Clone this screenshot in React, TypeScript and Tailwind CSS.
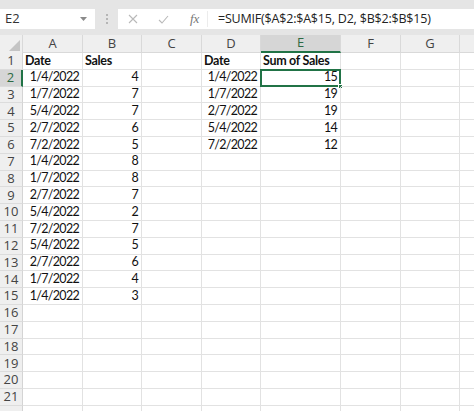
import React from 'react';

const columns = [
  { key: 'A', width: 'w-[60px]' },
  { key: 'B', width: 'w-[59px]' },
  { key: 'C', width: 'w-[60px]' },
  { key: 'D', width: 'w-[59px]' },
  { key: 'E', width: 'w-[80px]' },
  { key: 'F', width: 'w-[60px]' },
  { key: 'G', width: 'w-[59px]' },
  { key: 'H', width: 'w-[60px]' },
];

type Cell = { text: string; bold?: boolean; align?: 'left' | 'right' };
type RowData = Record<string, Cell>;

const sales: [string, number][] = [
  ['1/4/2022', 4],
  ['1/7/2022', 7],
  ['5/4/2022', 7],
  ['2/7/2022', 6],
  ['7/2/2022', 5],
  ['1/4/2022', 8],
  ['1/7/2022', 8],
  ['2/7/2022', 7],
  ['5/4/2022', 2],
  ['7/2/2022', 7],
  ['5/4/2022', 5],
  ['2/7/2022', 6],
  ['1/7/2022', 4],
  ['1/4/2022', 3],
];

const sums: [string, number][] = [
  ['1/4/2022', 15],
  ['1/7/2022', 19],
  ['2/7/2022', 19],
  ['5/4/2022', 14],
  ['7/2/2022', 12],
];

const buildRows = (): RowData[] => {
  const rows: RowData[] = [];
  rows.push({
    A: { text: 'Date', bold: true },
    B: { text: 'Sales', bold: true },
    D: { text: 'Date', bold: true },
    E: { text: 'Sum of Sales', bold: true },
  });
  for (let i = 0; i < 21; i++) {
    const row: RowData = {};
    if (sales[i]) {
      row.A = { text: sales[i][0], align: 'right' };
      row.B = { text: String(sales[i][1]), align: 'right' };
    }
    if (sums[i]) {
      row.D = { text: sums[i][0], align: 'right' };
      row.E = { text: String(sums[i][1]), align: 'right' };
    }
    rows.push(row);
  }
  return rows;
};

const rows = buildRows();

const uiFont = { fontFamily: '"Open Sans", "Noto Sans", sans-serif' };
const cellFont = { fontFamily: 'Lato, "Open Sans", sans-serif' };

export default function App() {
  return (
    <div className="h-[411px] w-[474px] overflow-hidden bg-[#e5e5e5]" style={uiFont}>
      {/* formula bar */}
      <div className="flex h-[35px] items-start pt-[9px]">
        <div className="flex h-[20px] w-[95px] items-center justify-between bg-white pl-[5px] pr-[8px] text-[13px] text-[#333]">
          <span>E2</span>
          <svg width="7" height="4" viewBox="0 0 7 4">
            <path d="M0 0h7L3.5 4z" fill="#8a8a8a" />
          </svg>
        </div>
        <div className="flex h-[20px] w-[23px] flex-col items-center justify-center gap-[2px]">
          <span className="h-[2px] w-[2px] bg-[#b5b5b5]" />
          <span className="h-[2px] w-[2px] bg-[#b5b5b5]" />
          <span className="h-[2px] w-[2px] bg-[#b5b5b5]" />
        </div>
        <div className="flex h-[20px] flex-1 items-center bg-white">
          <div className="flex w-[89px] items-center">
            <svg className="ml-[10px]" width="10" height="10" viewBox="0 0 10 10">
              <path d="M1 1l8 8M9 1l-8 8" stroke="#b9b9b9" strokeWidth="1.1" />
            </svg>
            <svg className="ml-[20px]" width="11" height="9" viewBox="0 0 11 9">
              <path d="M1 5l3 3 6-7" stroke="#b9b9b9" strokeWidth="1.1" fill="none" />
            </svg>
            <span
              className="ml-[21px] text-[13px] italic text-[#777]"
              style={{ fontFamily: '"Liberation Serif", serif' }}
            >
              fx
            </span>
          </div>
          <div className="h-[16px] w-px bg-[#ececec]" />
          <span className="ml-[10px] whitespace-nowrap text-[12.5px] tracking-[-0.2px] text-[#222]">
            =SUMIF($A$2:$A$15, D2, $B$2:$B$15)
          </span>
        </div>
      </div>

      {/* column headers */}
      <div className="flex h-[18px] bg-[#efefef] text-[13px] text-[#444]">
        <div className="relative w-[23px] shrink-0 border-r border-[#d9d9d9]">
          <svg className="absolute bottom-[2px] right-[2px]" width="11" height="11" viewBox="0 0 11 11">
            <path d="M11 0v11H0z" fill="#c4c4c4" />
          </svg>
        </div>
        {columns.map((col) =>
          col.key === 'E' ? (
            <div
              key={col.key}
              className={`${col.width} flex shrink-0 items-center justify-center border-b-2 border-r border-b-[#217346] border-r-[#d9d9d9] bg-[#d6d6d6] text-[#2d6a45]`}
            >
              {col.key}
            </div>
          ) : (
            <div
              key={col.key}
              className={`${col.width} flex shrink-0 items-center justify-center border-b border-r border-[#d9d9d9]`}
            >
              {col.key === 'H' ? '' : col.key}
            </div>
          ),
        )}
      </div>

      {/* grid */}
      <div className="bg-white">
        {rows.map((row, i) => {
          const rowNum = i + 1;
          const isActiveRow = rowNum === 2;
          return (
            <div key={rowNum} className="flex h-[16.8px]">
              <div
                className={`flex w-[23px] shrink-0 items-center justify-center border-b border-[#dcdcdc] text-[13px] ${
                  isActiveRow
                    ? 'border-r-2 border-r-[#217346] bg-[#d6d6d6] text-[#2d6a45]'
                    : 'border-r border-r-[#d4d4d4] bg-[#efefef] text-[#444]'
                }`}
              >
                {rowNum <= 21 ? rowNum : ''}
              </div>
              {columns.map((col) => {
                const cell = row[col.key];
                const selected = isActiveRow && col.key === 'E';
                return (
                  <div
                    key={col.key}
                    className={`${col.width} relative flex shrink-0 items-center overflow-visible border-b border-r border-[#e2e2e2] px-[3px] text-[12.5px] tracking-[-0.7px] text-[#111] ${
                      cell?.align === 'right' ? 'justify-end' : 'justify-start pl-[2px]'
                    }`}
                    style={cellFont}
                  >
                    {cell ? (
                      <span className={`whitespace-nowrap ${cell.bold ? 'font-bold tracking-[-0.3px]' : ''}`}>
                        {cell.text}
                      </span>
                    ) : null}
                    {selected ? (
                      <>
                        <div className="pointer-events-none absolute -left-px -top-px bottom-[-1px] right-[-1px] border-2 border-[#217346]" />
                        <div className="absolute bottom-[-3px] right-[-3px] h-[5px] w-[5px] border border-white bg-[#217346]" />
                      </>
                    ) : null}
                  </div>
                );
              })}
            </div>
          );
        })}
      </div>
    </div>
  );
}
